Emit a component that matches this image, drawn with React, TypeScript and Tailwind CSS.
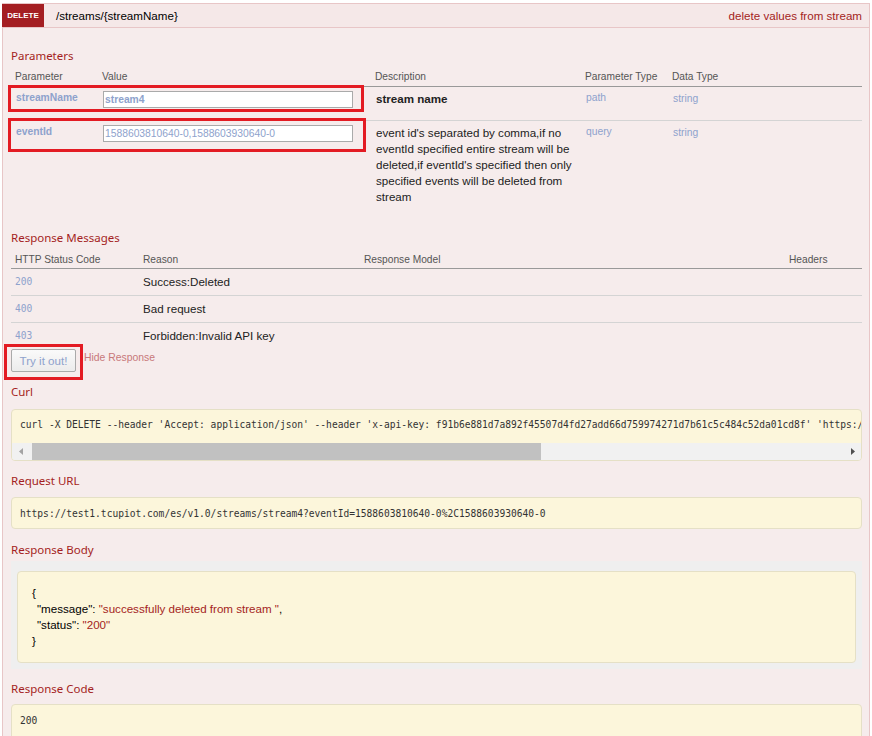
import React from 'react';

const heading = "font-['Noto_Sans','Open_Sans',sans-serif] text-[11.5px] leading-[20px] h-[20px] text-[#a41e22]";
const mono = "font-['DejaVu_Sans_Mono','Liberation_Mono',monospace] text-[9.6px]";
const yellowBox = 'border border-[#e5e0c6] rounded-[4px] bg-[#fcf6db]';

const curl =
    "curl -X DELETE --header 'Accept: application/json' --header 'x-api-key: f91b6e881d7a892f45507d4fd27add66d759974271d7b61c5c484c52da01cd8f' 'https://test1.tcupiot.com/es/v1.0/streams/stream4?eventId=1588603810640-0%2C1588603930640-0'";

const messages = [
    { code: '200', reason: 'Success:Deleted' },
    { code: '400', reason: 'Bad request' },
    { code: '403', reason: 'Forbidden:Invalid API key' },
];

const App: React.FC = () => {
    return (
        <div className="relative w-[872px] h-[736px] overflow-hidden bg-white pt-[3px] px-[2px] font-['Liberation_Sans',Arial,sans-serif] text-[#333]">
            {/* heading bar */}
            <div className="flex items-stretch h-[25px] border-y border-r border-[#e8c6c7] bg-[#f5e8e8]">
                <div className="w-[42px] flex items-center justify-center bg-[#a41e22] text-white text-[8px] font-bold">
                    DELETE
                </div>
                <div className="ml-[12px] flex items-center text-[11.6px] text-black">/streams/{'{streamName}'}</div>
                <div className="ml-auto mr-[7px] flex items-center text-[11.6px] text-[#a41e22]">delete values from stream</div>
            </div>

            {/* content */}
            <div className="border-x border-[#e8c6c7] bg-[#f6ecec] pl-[8px] pr-[7px] pt-[18px] pb-[40px]">
                <div className={heading}>Parameters</div>

                <div className="grid grid-cols-[88px_273px_210px_87px_1fr] h-[21px] pt-[2px] border-b border-[#999] text-[10.2px] text-[#555] items-center">
                    <div className="px-[4px]">Parameter</div>
                    <div className="px-[3px]">Value</div>
                    <div className="px-[3px]">Description</div>
                    <div className="px-[3px]">Parameter Type</div>
                    <div className="px-[3px]">Data Type</div>
                </div>

                <div className="grid grid-cols-[88px_273px_210px_87px_1fr] h-[34px] border-b border-[#d4d4d4] pt-[4px] items-start">
                    <div className="px-[5px] text-[10.3px] leading-[13px] font-bold text-[#8ea2cc]">streamName</div>
                    <div className="px-[4px]">
                        <div className="w-[250px] h-[17px] border border-[#aaa] bg-white px-[1px] text-[10.3px] leading-[15px] font-bold text-[#8ea2cc]">
                            stream4
                        </div>
                    </div>
                    <div className="px-[4px] text-[11.6px] leading-[16px] font-bold text-[#222]">stream name</div>
                    <div className="px-[4px] text-[10.3px] leading-[13px] text-[#8ea2cc]">path</div>
                    <div className="px-[4px] text-[10.3px] leading-[15px] text-[#8ea2cc]">string</div>
                </div>

                <div className="grid grid-cols-[88px_273px_210px_87px_1fr] pt-[4px] pb-[4px] items-start">
                    <div className="px-[5px] text-[10.3px] leading-[13px] font-bold text-[#8ea2cc]">eventId</div>
                    <div className="px-[4px]">
                        <div className="w-[250px] h-[17px] border border-[#aaa] bg-white px-[1px] text-[10.3px] leading-[15px] text-[#8ea2cc]">
                            1588603810640-0,1588603930640-0
                        </div>
                    </div>
                    <div className="px-[4px] text-[11.6px] leading-[16px] text-[#222]">
                        event id's separated by comma,if no eventId specified entire stream will be deleted,if eventId's specified then only specified events will be deleted from stream
                    </div>
                    <div className="px-[4px] text-[10.3px] leading-[13px] text-[#8ea2cc]">query</div>
                    <div className="px-[4px] text-[10.3px] leading-[15px] text-[#8ea2cc]">string</div>
                </div>

                <div className={`${heading} mt-[19px]`}>Response Messages</div>
                <div className="grid grid-cols-[128px_221px_425px_1fr] h-[21px] pt-[3px] border-b border-[#999] text-[10.2px] text-[#555] items-center">
                    <div className="px-[4px]">HTTP Status Code</div>
                    <div className="px-[4px]">Reason</div>
                    <div className="px-[4px]">Response Model</div>
                    <div className="px-[4px]">Headers</div>
                </div>
                {messages.map((m, i) => (
                    <div key={m.code} className={rowClass(i === messages.length - 1)}>
                        <div className={`px-[4px] ${mono} text-[#8ea2cc]`}>{m.code}</div>
                        <div className="px-[4px] text-[11.6px] text-[#222]">{m.reason}</div>
                        <div />
                        <div />
                    </div>
                ))}

                <div className="flex items-start">
                    <button className="w-[65px] h-[23px] border border-[#aaa] rounded-[2px] bg-gradient-to-b from-[#fafafa] to-[#ececec] text-[11.6px] text-[#8ea2cc]">
                        Try it out!
                    </button>
                    <span className="ml-[8px] mt-[2px] text-[10.4px] leading-[13px] text-[#c8787a]">Hide Response</span>
                </div>

                <div className={`${heading} mt-[10px]`}>Curl</div>
                <div className={`${yellowBox} mt-[7px] overflow-hidden`}>
                    <div className={`h-[33px] pt-[8px] pl-[8px] whitespace-nowrap leading-[13px] text-[#333] ${mono}`}>{curl}</div>
                    <div className="flex h-[17px] items-stretch bg-[#f1f1f1]">
                        <div className="w-[17px] flex items-center justify-center">
                            <svg width="4" height="7" viewBox="0 0 4 7">
                                <path d="M4 0 L0 3.5 L4 7 Z" fill="#a3a3a3" />
                            </svg>
                        </div>
                        <div className="ml-[3px] w-[509px] bg-[#c1c1c1]" />
                        <div className="flex-1" />
                        <div className="w-[17px] flex items-center justify-center">
                            <svg width="4" height="7" viewBox="0 0 4 7">
                                <path d="M0 0 L4 3.5 L0 7 Z" fill="#505050" />
                            </svg>
                        </div>
                    </div>
                </div>

                <div className={`${heading} mt-[10px]`}>Request URL</div>
                <div className={`${yellowBox} mt-[6px] pt-[9px] pb-[8px] pl-[8px] leading-[13px] whitespace-nowrap ${mono}`}>
                    https://test1.tcupiot.com/es/v1.0/streams/stream4?eventId=1588603810640-0%2C1588603930640-0
                </div>

                <div className={`${heading} mt-[11px]`}>Response Body</div>
                <div className="mt-[1px] bg-[#efefef] pt-[10px] px-[6px] pb-[6px]">
                    <div className={`${yellowBox} py-[13px] pl-[14px] text-[11.6px] leading-[16px] text-black`}>
                        <div>{'{'}</div>
                        <div className="pl-[5px]">
                            "message": <span className="text-[#a41e22]">"successfully deleted from stream "</span>,
                        </div>
                        <div className="pl-[5px]">
                            "status": <span className="text-[#a41e22]">"200"</span>
                        </div>
                        <div>{'}'}</div>
                    </div>
                </div>

                <div className={`${heading} mt-[10px]`}>Response Code</div>
                <div className={`${yellowBox} mt-[5px] pt-[9px] pb-[20px] pl-[8px] leading-[13px] ${mono}`}>200</div>
            </div>

            {/* highlight annotations */}
            <div className="absolute left-[8px] top-[85px] w-[356px] h-[27px] border-[3px] border-[#e31b23]" />
            <div className="absolute left-[8px] top-[118px] w-[358px] h-[34px] border-[3px] border-[#e31b23]" />
            <div className="absolute left-[4px] top-[344px] w-[79px] h-[36px] border-[3px] border-[#e31b23]" />
        </div>
    );
};

function rowClass(last: boolean) {
    return last
        ? 'grid grid-cols-[128px_221px_425px_1fr] h-[26px] items-center'
        : 'grid grid-cols-[128px_221px_425px_1fr] h-[27px] items-center border-b border-[#d4d4d4]';
}

export default App;
